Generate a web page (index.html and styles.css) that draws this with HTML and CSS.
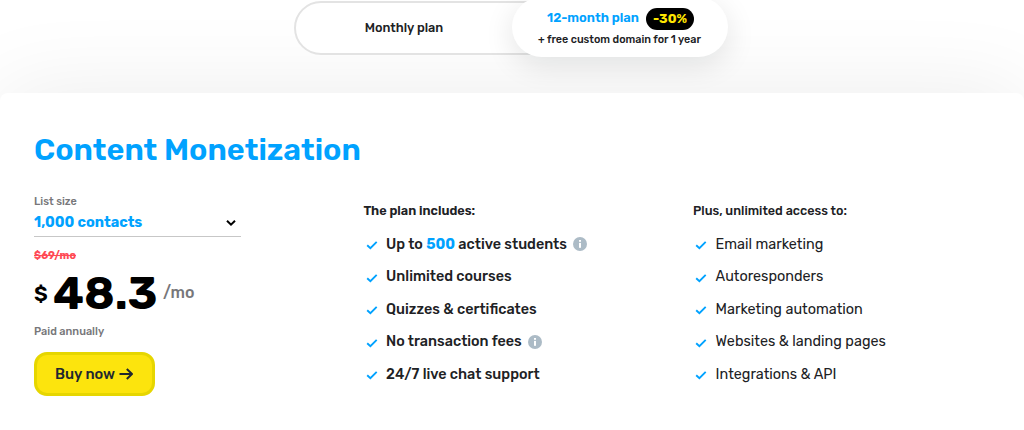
FILE: index.html
```html
<!DOCTYPE html>
<html lang="en">
<head>
<meta charset="utf-8">
<title>Content Monetization</title>
<link rel="stylesheet" href="styles.css">
</head>
<body>
<svg class="defs" aria-hidden="true">
  <symbol id="check" viewBox="0 0 12 10"><path d="M1.2 5.2 4.4 8.2 10.7 1.9" fill="none" stroke="#00a2ff" stroke-width="1.9"/></symbol>
  <symbol id="info" viewBox="0 0 14 14"><circle cx="7" cy="7" r="7" fill="#acbbc6"/><rect x="6" y="5.9" width="2" height="4.9" fill="#fff"/><rect x="6" y="3" width="2" height="1.8" fill="#fff"/></symbol>
</svg>
<header class="top">
  <div class="switch">
    <div class="monthly">Monthly plan</div>
    <div class="yearly">
      <div class="yearly-row"><span class="yearly-name">12-month plan</span><span class="badge">-30%</span></div>
      <div class="yearly-note">+ free custom domain for 1 year</div>
    </div>
  </div>
</header>
<main class="card">
  <h1 class="title">Content Monetization</h1>
  <div class="columns">
    <section class="pricing">
      <div class="label">List size</div>
      <div class="select"><span>1,000 contacts</span>
        <svg class="chevron" viewBox="0 0 10 8"><path d="M1 1.8 5 5.7 9 1.8" fill="none" stroke="#000" stroke-width="2"/></svg></div>
      <div class="old"><s>$69/mo</s></div>
      <div class="price"><span class="currency">$</span><span class="amount">48.3</span><span class="period">/mo</span></div>
      <div class="label paid">Paid annually</div>
      <button class="buy"><span>Buy now</span>
        <svg class="arrow" viewBox="0 0 14 12"><path d="M.5 6H13M7.8 1 13 6 7.8 11" fill="none" stroke="#202730" stroke-width="2" stroke-linejoin="round"/></svg></button>
    </section>
    <section class="features strong">
      <h2>The plan includes:</h2>
      <ul>
        <li><svg class="check"><use href="#check"/></svg><span>Up to <b>500</b> active students</span><svg class="info"><use href="#info"/></svg></li>
        <li><svg class="check"><use href="#check"/></svg><span>Unlimited courses</span></li>
        <li><svg class="check"><use href="#check"/></svg><span>Quizzes &amp; certificates</span></li>
        <li><svg class="check"><use href="#check"/></svg><span>No transaction fees</span><svg class="info"><use href="#info"/></svg></li>
        <li><svg class="check"><use href="#check"/></svg><span>24/7 live chat support</span></li>
      </ul>
    </section>
    <section class="features">
      <h2>Plus, unlimited access to:</h2>
      <ul>
        <li><svg class="check"><use href="#check"/></svg><span>Email marketing</span></li>
        <li><svg class="check"><use href="#check"/></svg><span>Autoresponders</span></li>
        <li><svg class="check"><use href="#check"/></svg><span>Marketing automation</span></li>
        <li><svg class="check"><use href="#check"/></svg><span>Websites &amp; landing pages</span></li>
        <li><svg class="check"><use href="#check"/></svg><span>Integrations &amp; API</span></li>
      </ul>
    </section>
  </div>
</main>
</body>
</html>
```
FILE: styles.css
```css
* { box-sizing: border-box; }
body {
  margin: 0;
  height: 430px;
  overflow: hidden;
  background: #fff;
  color: #202124;
  font-family: Rubik, Roboto, "Liberation Sans", sans-serif;
  white-space: nowrap;
}
.defs { position: absolute; width: 0; height: 0; }
.top { height: 93px; padding: 1px 0 0 294px; }
.switch {
  display: flex;
  width: 430px;
  height: 54px;
  border: 2px solid #e3e3e3;
  border-radius: 27px;
  background: #fff;
  position: relative;
  z-index: 1;
}
.monthly {
  flex: none;
  width: 216px;
  display: flex;
  align-items: center;
  justify-content: center;
  padding-bottom: 2px;
  font-size: 12.7px;
  font-weight: 500;
}
.yearly {
  flex: none;
  width: 216px;
  height: 60px;
  margin-top: -6px;
  padding-top: 11px;
  border-radius: 30px;
  background: #fff;
  box-shadow: 0 8px 30px rgba(0, 20, 20, .11);
}
.yearly-row { display: flex; align-items: center; height: 21px; padding-left: 35px; gap: 7px; }
.yearly-name { width: 92px; padding-bottom: 3px; color: #00a2ff; font-weight: 600; font-size: 12.9px; }
.badge {
  display: flex; align-items: center; justify-content: center;
  width: 48px; height: 22px; border-radius: 11px;
  background: #000; color: #ffe600; font-weight: 700; font-size: 13px;
}
.yearly-note { padding: 4px 0 0 26px; font-size: 10.8px; font-weight: 500; line-height: 14px; }
.card {
  height: 348px;
  padding: 37px 34px 0;
  border-radius: 8px;
  background: #fff;
  box-shadow: 0 0 90px rgba(0, 0, 0, .08);
}
.title { margin: 0; color: #00a2ff; font-size: 30.6px; line-height: 40px; font-weight: 600; }
.columns { display: grid; grid-template-columns: 329.5px 329.5px 1fr; margin-top: 23px; }
.pricing { width: 207px; }
.label { color: #77777a; font-size: 10.9px; line-height: 18px; font-weight: 500; }
.select {
  display: flex; justify-content: space-between; align-items: center;
  height: 26px; padding: 0 5px 2px 0; border-bottom: 1px solid #c7c7c7;
  color: #00a2ff; font-size: 14.4px; font-weight: 700;
}
.chevron { width: 10px; height: 8px; margin-top: 1px; }
.old { margin-top: 12px; height: 14px; color: #ff4a55; font-size: 10.7px; line-height: 14px; font-weight: 700; }
.price { display: flex; align-items: center; height: 60px; color: #000; }
.currency { width: 19px; padding-top: 1px; font-size: 21px; font-weight: 600; }
.amount { width: 110px; font-size: 45.5px; font-weight: 700; }
.period { padding-bottom: 2px; color: #77777a; font-size: 16px; font-weight: 500; }
.buy {
  display: flex; align-items: center; gap: 4px;
  width: 121px; height: 44px; margin-top: 11px; padding: 0 0 0 18px;
  border: 3px solid #e6d600; border-radius: 13px; background: #fce40d;
  color: #202730; font-family: inherit; font-size: 14.6px; font-weight: 500;
}
.arrow { width: 14px; height: 12px; }
.features h2 { margin: 10px 0 0; font-size: 12.6px; line-height: 16px; font-weight: 500; }
.features.strong h2 { font-size: 12.7px; font-weight: 600; }
.features ul { list-style: none; margin: 9px 0 0; padding: 0; }
.features li { display: flex; align-items: center; height: 32.5px; padding-left: 2px; font-size: 14.4px; }
.strong li { font-weight: 500; }
.features b { color: #00a2ff; font-weight: 700; }
.check { width: 12px; height: 10px; margin: 2px 8.6px 0 0; }
.info { width: 14px; height: 14px; margin-left: 6px; }
```
